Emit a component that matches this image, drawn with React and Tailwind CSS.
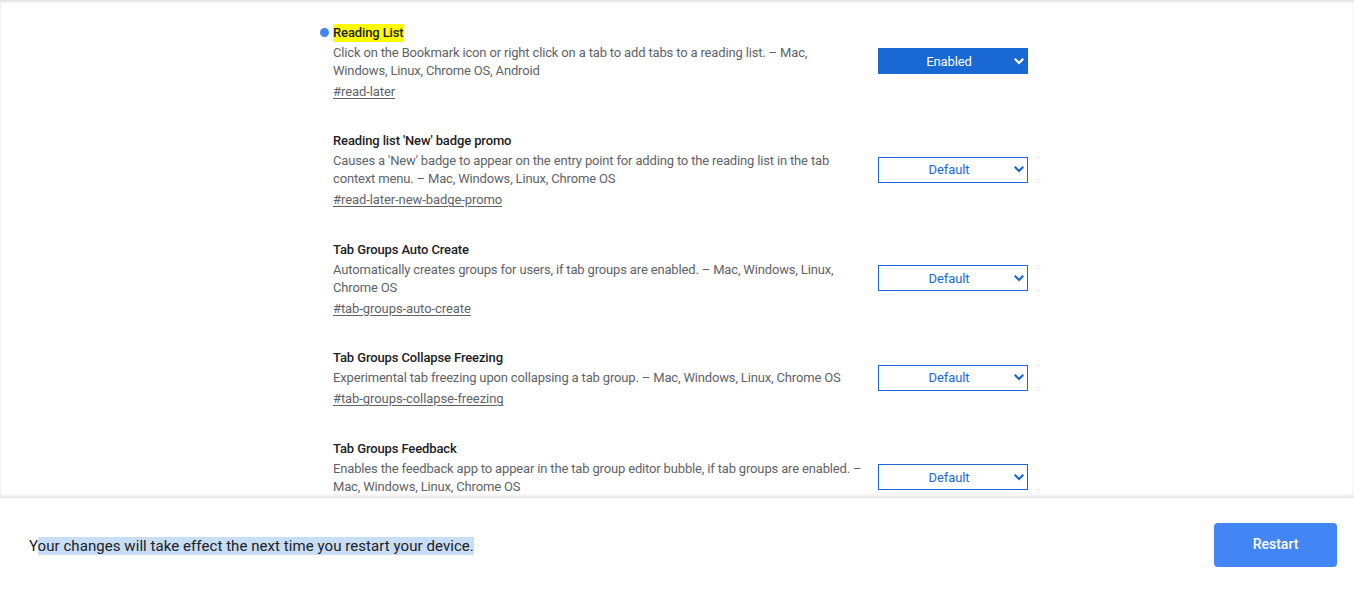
import React from "react";

const experiments = [
  {
    name: "Reading List",
    desc: "Click on the Bookmark icon or right click on a tab to add tabs to a reading list. – Mac, Windows, Linux, Chrome OS, Android",
    link: "#read-later",
    value: "Enabled",
    highlight: true,
  },
  {
    name: "Reading list 'New' badge promo",
    desc: "Causes a 'New' badge to appear on the entry point for adding to the reading list in the tab context menu. – Mac, Windows, Linux, Chrome OS",
    link: "#read-later-new-badge-promo",
    value: "Default",
  },
  {
    name: "Tab Groups Auto Create",
    desc: "Automatically creates groups for users, if tab groups are enabled. – Mac, Windows, Linux, Chrome OS",
    link: "#tab-groups-auto-create",
    value: "Default",
  },
  {
    name: "Tab Groups Collapse Freezing",
    desc: "Experimental tab freezing upon collapsing a tab group. – Mac, Windows, Linux, Chrome OS",
    link: "#tab-groups-collapse-freezing",
    value: "Default",
  },
  {
    // link of this one sits under the footer, keep its space only
    name: "Tab Groups Feedback",
    desc: "Enables the feedback app to appear in the tab group editor bubble, if tab groups are enabled. – Mac, Windows, Linux, Chrome OS",
    link: null,
    value: "Default",
  },
];

function Chevron({ color }) {
  return (
    <svg width="10" height="7" viewBox="0 0 10 7" className="shrink-0">
      <path d="M1.5 1.5 L5 5 L8.5 1.5" fill="none" stroke={color} strokeWidth="2.2" strokeLinecap="square" />
    </svg>
  );
}

function FlagSelect({ value }) {
  const enabled = value === "Enabled";
  return (
    <div
      className={
        enabled
          ? "w-[150px] h-[26px] shrink-0 flex items-center bg-[#1a68d3] text-white pl-[10px] pr-[4px]"
          : "w-[150px] h-[26px] shrink-0 flex items-center bg-white border border-[#1a68d3] text-[#1a68d3] pl-[9px] pr-[3px]"
      }
    >
      <span className="flex-1 text-center text-[13px] leading-none pr-[4px] tracking-[-0.1px]">{value}</span>
      <Chevron color={enabled ? "#ffffff" : "#1a68d3"} />
    </div>
  );
}

function Experiment({ exp }) {
  return (
    <div className="flex items-center mb-[29.5px]">
      <div className="w-[530px] relative">
        {exp.highlight && (
          <span className="absolute left-[-13px] top-[6px] w-[9px] h-[9px] rounded-full bg-[#4285f4]"></span>
        )}
        <div className="h-[22px] flex items-center">
          <span
            className={
              "inline-block leading-[18px] text-[13px] font-medium tracking-[-0.12px] text-[#202124] " +
              (exp.highlight ? "bg-[#ffff00]" : "")
            }
          >
            {exp.name}
          </span>
        </div>
        <p className="text-[13px] leading-[18px] tracking-[-0.16px] text-[#5f6368]">{exp.desc}</p>
        {exp.link ? (
          <a className="block mt-[3px] text-[13px] leading-[18px] tracking-[-0.08px] text-[#5f6368] underline underline-offset-[2px]">
            {exp.link}
          </a>
        ) : (
          <div className="h-[21px]"></div>
        )}
      </div>
      <div className="ml-[15px]">
        <FlagSelect value={exp.value} />
      </div>
    </div>
  );
}

export default function App() {
  return (
    <div
      className="h-[589px] w-[1354px] flex flex-col bg-white overflow-hidden"
      style={{ fontFamily: "Roboto, 'Liberation Sans', sans-serif" }}
    >
      <div className="flex-1 overflow-hidden pt-[21.5px] pl-[333px] shadow-[inset_0_2px_3px_rgba(0,0,0,0.12)]">
        {experiments.map((exp) => (
          <Experiment key={exp.name} exp={exp} />
        ))}
      </div>
      <div className="h-[92px] shrink-0 flex items-center justify-between pl-[29px] pr-[17px] pt-[2px] border-t border-[#e6e6e6] shadow-[0_-2px_3px_rgba(0,0,0,0.08)] bg-white">
        <p className="text-[15px] leading-[20px] tracking-[0.06px] text-[#202124] pt-[2px]">
          Y<span className="bg-[#c8ddf6]">our changes will take effect the next time you restart your device.</span>
        </p>
        <button className="w-[123px] h-[44px] rounded-[4px] bg-[#4285f4] text-white text-[14px] font-medium">
          Restart
        </button>
      </div>
    </div>
  );
}
